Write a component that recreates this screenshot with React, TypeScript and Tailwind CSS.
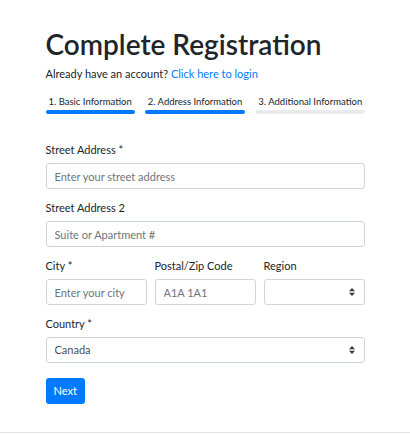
import React, { useState } from 'react';

const steps = [
  { label: '1. Basic Information', active: true },
  { label: '2. Address Information', active: true },
  { label: '3. Additional Information', active: false },
];

const inputCls =
  'block w-full h-[26px] rounded-[3px] border border-[#ced4da] bg-white px-[8px] text-[11px] text-[#495057] placeholder:text-[#6c757d] outline-none';

const SelectArrows: React.FC = () => (
  <svg className="pointer-events-none absolute right-[10px] top-1/2 -translate-y-1/2" width="6" height="9" viewBox="0 0 6 9">
    <path d="M3 0.5 L6 3.7 H0 Z" fill="#343a40" />
    <path d="M3 8.5 L6 5.3 H0 Z" fill="#343a40" />
  </svg>
);

const App: React.FC = () => {
  const [form, setForm] = useState({
    street: '',
    street2: '',
    city: '',
    postal: '',
    region: '',
    country: 'Canada',
  });

  const update = (e: React.ChangeEvent<HTMLInputElement | HTMLSelectElement>) => {
    const { name, value } = e.target;
    setForm(prev => ({ ...prev, [name]: value }));
  };

  return (
    <div
      className="min-h-[433px] border-b border-[#e5e5e5] bg-white text-[#212529]"
      style={{ fontFamily: 'Lato, "Noto Sans", sans-serif' }}
    >
      <div className="mx-auto w-[319px] pt-[26px]">
        <h1 className="text-[28px] font-semibold leading-[36px]">Complete Registration</h1>
        <p className="mt-[3px] text-[11px] leading-[18px]">
          Already have an account?{' '}
          <a href="#" className="text-[#007bff]">Click here to login</a>
        </p>

        <div className="mt-[12px] flex gap-[10px]">
          {steps.map(s => (
            <div key={s.label} className="flex flex-col">
              <span className="px-[3px] text-[9.5px] leading-[14px] whitespace-nowrap">{s.label}</span>
              <div className={`mt-[1px] h-[4px] rounded-full ${s.active ? 'bg-[#007bff]' : 'bg-[#e9ecef]'}`} />
            </div>
          ))}
        </div>

        <form className="mt-[28px]" onSubmit={e => e.preventDefault()}>
          <div>
            <label className="block text-[11px] leading-[16px]">Street Address *</label>
            <input
              name="street"
              value={form.street}
              onChange={update}
              placeholder="Enter your street address"
              className={`mt-[5px] ${inputCls}`}
            />
          </div>

          <div className="mt-[11px]">
            <label className="block text-[11px] leading-[16px]">Street Address 2</label>
            <input
              name="street2"
              value={form.street2}
              onChange={update}
              placeholder="Suite or Apartment #"
              className={`mt-[5px] ${inputCls}`}
            />
          </div>

          <div className="mt-[11px] grid grid-cols-3 gap-[8px]">
            <div>
              <label className="block text-[11px] leading-[16px]">City *</label>
              <input
                name="city"
                value={form.city}
                onChange={update}
                placeholder="Enter your city"
                className={`mt-[5px] ${inputCls}`}
              />
            </div>
            <div>
              <label className="block text-[11px] leading-[16px]">Postal/Zip Code</label>
              <input
                name="postal"
                value={form.postal}
                onChange={update}
                placeholder="A1A 1A1"
                className={`mt-[5px] ${inputCls}`}
              />
            </div>
            <div>
              <label className="block text-[11px] leading-[16px]">Region</label>
              <div className="relative mt-[5px]">
                <select name="region" value={form.region} onChange={update} className={`appearance-none ${inputCls}`}>
                  <option value=""></option>
                </select>
                <SelectArrows />
              </div>
            </div>
          </div>

          <div className="mt-[11px]">
            <label className="block text-[11px] leading-[16px]">Country *</label>
            <div className="relative mt-[5px]">
              <select name="country" value={form.country} onChange={update} className={`appearance-none ${inputCls}`}>
                <option>Canada</option>
                <option>United States</option>
              </select>
              <SelectArrows />
            </div>
          </div>

          <button
            type="submit"
            className="mt-[15px] h-[26px] rounded-[3px] bg-[#007bff] px-[8px] text-[11px] text-white"
          >
            Next
          </button>
        </form>
      </div>
    </div>
  );
};

export default App;
